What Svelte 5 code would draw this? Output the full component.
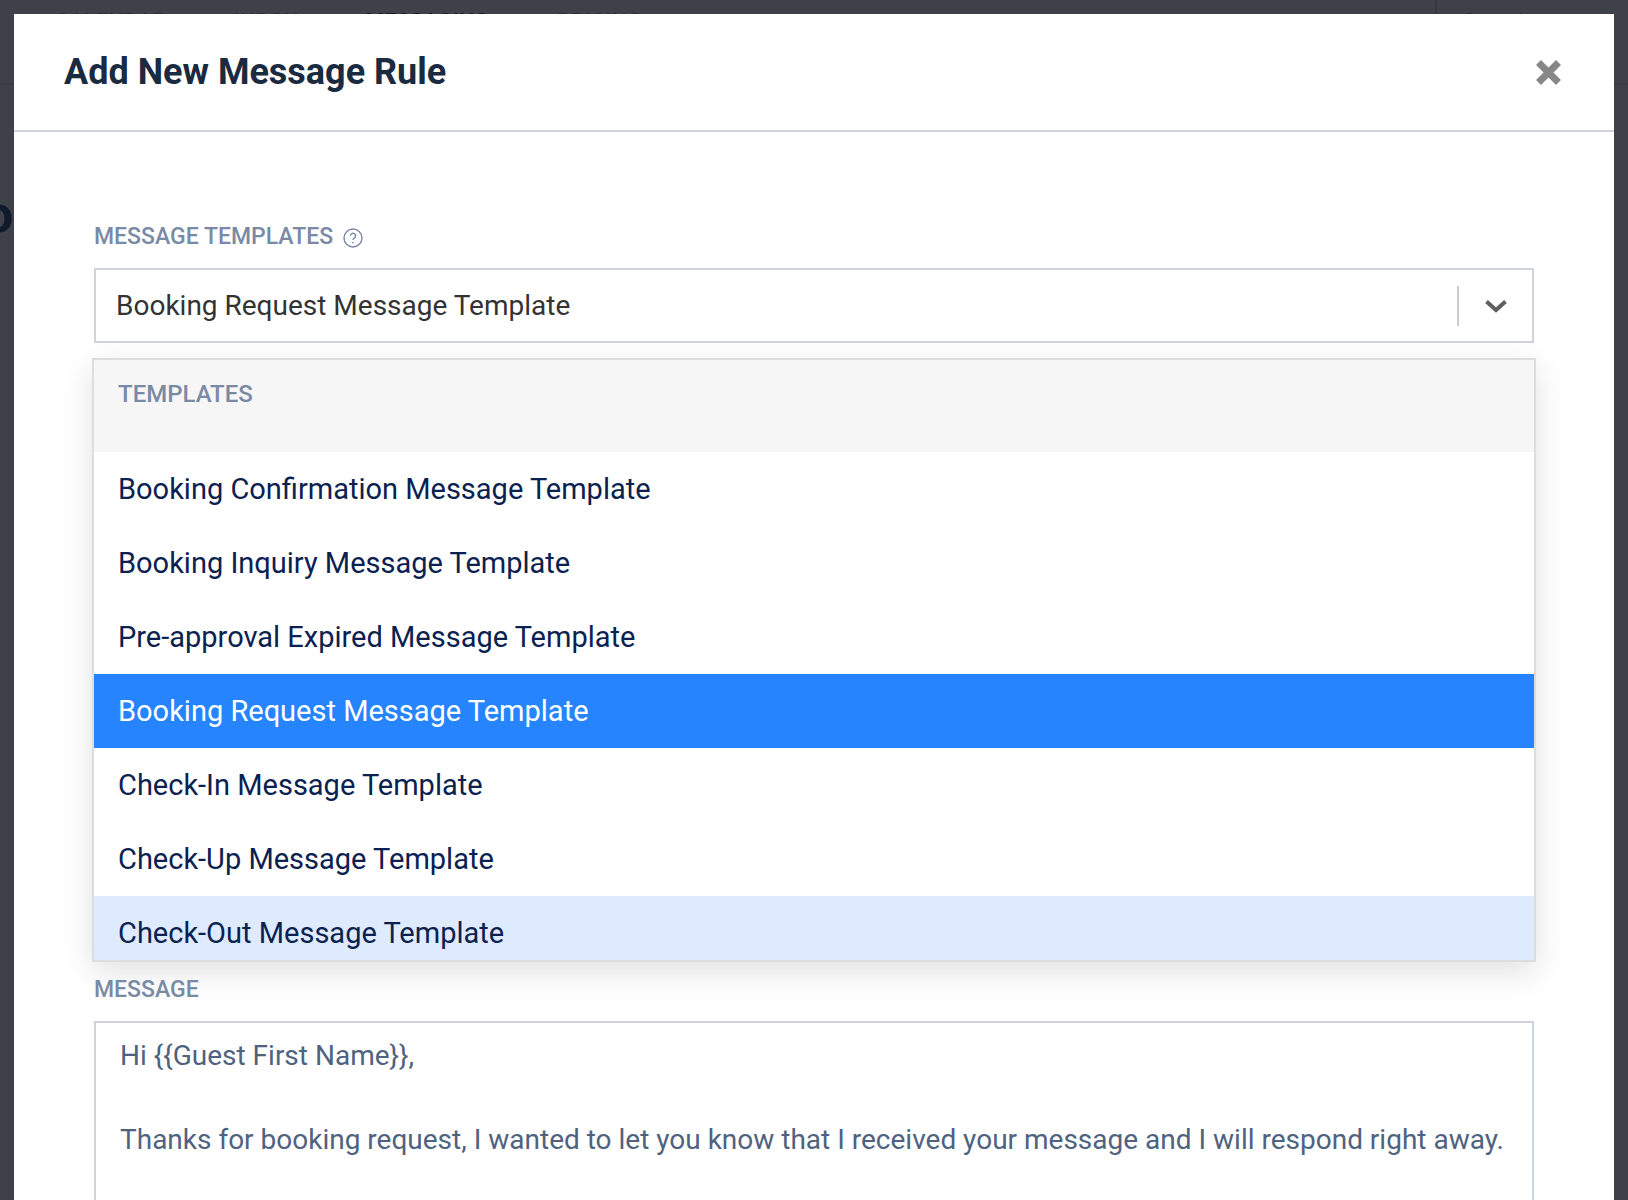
<script>
  const templates = [
    'Booking Confirmation Message Template',
    'Booking Inquiry Message Template',
    'Pre-approval Expired Message Template',
    'Booking Request Message Template',
    'Check-In Message Template',
    'Check-Up Message Template',
    'Check-Out Message Template'
  ]
  const selected = 'Booking Request Message Template'
  const focused = 'Check-Out Message Template'
  const nav = ['CALENDAR', 'INBOX', 'MESSAGING', 'PRICING']
  const message = 'Hi {{Guest First Name}},\n\nThanks for booking request, I wanted to let you know that I received your message and I will respond right away.'
</script>

<div class="page">
  <div class="behind">
    <div class="topbar">
      <nav class="nav">
        {#each nav as item}
          <span class="nav-item" class:active={item === 'MESSAGING'}>{item}</span>
        {/each}
      </nav>
      <div class="account">Search</div>
    </div>
    <div class="page-title">ol</div>
  </div>

  <div class="modal">
    <header class="modal-header">
      <h2>Add New Message Rule</h2>
      <svg class="close" viewBox="0 0 27 27" width="27" height="27">
        <path d="M3.5 3.5 23.5 23.5M23.5 3.5 3.5 23.5" stroke="#878787" stroke-width="7" fill="none" />
      </svg>
    </header>

    <div class="modal-body">
      <div class="field">
        <div class="label">
          MESSAGE TEMPLATES
          <svg class="help" viewBox="0 0 20 20" width="20" height="20">
            <circle cx="10" cy="10" r="9" fill="none" stroke="#7a8aa5" stroke-width="1.4" />
            <path d="M7.4 7.8a2.6 2.6 0 1 1 3.9 2.3c-.8.5-1.3 1-1.3 2" fill="none" stroke="#7a8aa5" stroke-width="1.4" />
            <circle cx="10" cy="14.6" r="0.9" fill="#7a8aa5" />
          </svg>
        </div>
        <div class="select">
          <span class="value">{selected}</span>
          <span class="divider"></span>
          <svg class="chevron" viewBox="0 0 24 14" width="24" height="14">
            <path d="M2.5 2.5 12 11 21.5 2.5" fill="none" stroke="#5f5f5f" stroke-width="4" />
          </svg>
        </div>

        <div class="menu">
          <div class="group">TEMPLATES</div>
          {#each templates as t}
            <div class="option" class:selected={t === selected} class:focused={t === focused}>{t}</div>
          {/each}
        </div>
      </div>

      <div class="field message">
        <div class="label">MESSAGE</div>
        <textarea readonly value={message}></textarea>
      </div>
    </div>
  </div>
</div>

<style>
  :global(body) {
    margin: 0;
  }

  .page {
    position: relative;
    height: 1200px;
    overflow: hidden;
    background: #3e4149;
    font-family: Roboto, "Liberation Sans", sans-serif;
  }

  /* dimmed page under the modal */
  .topbar {
    display: flex;
    justify-content: space-between;
    height: 59px;
    border-bottom: 2px solid #383b42;
    box-sizing: content-box;
    padding-bottom: 24px;
  }
  .nav {
    display: flex;
    gap: 67px;
    padding: 9px 0 0 55px;
  }
  .nav-item {
    font-size: 22px;
    font-weight: 500;
    line-height: 26px;
    color: #2a2d34;
  }
  .nav-item.active {
    color: #14171d;
  }
  .account {
    border-left: 2px solid #35383f;
    width: 165px;
    padding: 9px 0 0 26px;
    font-size: 22px;
    line-height: 26px;
    color: #2a2d34;
  }
  .page-title {
    margin: 100px 0 0 -16px;
    width: 30px;
    font-size: 52px;
    font-weight: 700;
    line-height: 60px;
    color: #101a2a;
    white-space: nowrap;
  }

  .modal {
    position: absolute;
    top: 14px;
    left: 14px;
    right: 14px;
    height: 1400px;
    background: #fff;
  }

  .modal-header {
    display: flex;
    align-items: center;
    justify-content: space-between;
    height: 116px;
    padding: 0 52px 0 50px;
    border-bottom: 2px solid #ced3de;
  }
  .modal-header h2 {
    margin: 0;
    font-size: 36px;
    font-weight: 700;
    color: #1a2a40;
  }

  .modal-body {
    padding: 90px 80px 0;
  }

  .field {
    position: relative;
  }
  .label {
    display: flex;
    align-items: center;
    gap: 10px;
    height: 28px;
    font-size: 23px;
    font-weight: 500;
    color: #7a8aa5;
  }
  .help {
    margin-top: 3px;
  }

  .select {
    display: flex;
    align-items: center;
    box-sizing: border-box;
    height: 75px;
    margin-top: 18px;
    padding: 0 24px 0 20px;
    border: 2px solid #ced3dc;
  }
  .value {
    flex: 1;
    font-size: 28px;
    color: #333;
  }
  .divider {
    width: 2px;
    height: 40px;
    background: #ccc;
    margin-right: 25px;
  }

  .menu {
    position: absolute;
    top: 136px;
    left: -2px;
    right: -2px;
    height: 600px;
    overflow: hidden;
    border: 2px solid #ddd;
    background: #fff;
    box-shadow: 0 10px 30px rgba(0, 0, 0, 0.12);
  }
  .group {
    box-sizing: border-box;
    height: 92px;
    padding: 20px 24px 0;
    background: #f6f6f6;
    font-size: 24px;
    font-weight: 500;
    color: #7a8aa5;
  }
  .option {
    display: flex;
    align-items: center;
    box-sizing: border-box;
    height: 74px;
    padding: 0 24px;
    font-size: 29px;
    color: #0b2150;
  }
  .option.selected {
    background: #2684ff;
    color: #fff;
  }
  .option.focused {
    background: #deebff;
  }

  .message {
    margin-top: 632px;
  }
  .message textarea {
    display: block;
    box-sizing: border-box;
    width: 100%;
    height: 300px;
    margin-top: 18px;
    padding: 12px 24px;
    border: 2px solid #ced3e0;
    border-radius: 0;
    outline: none;
    resize: none;
    overflow: hidden;
    font-family: inherit;
    font-size: 28px;
    line-height: 42px;
    color: #4f6280;
  }
</style>
